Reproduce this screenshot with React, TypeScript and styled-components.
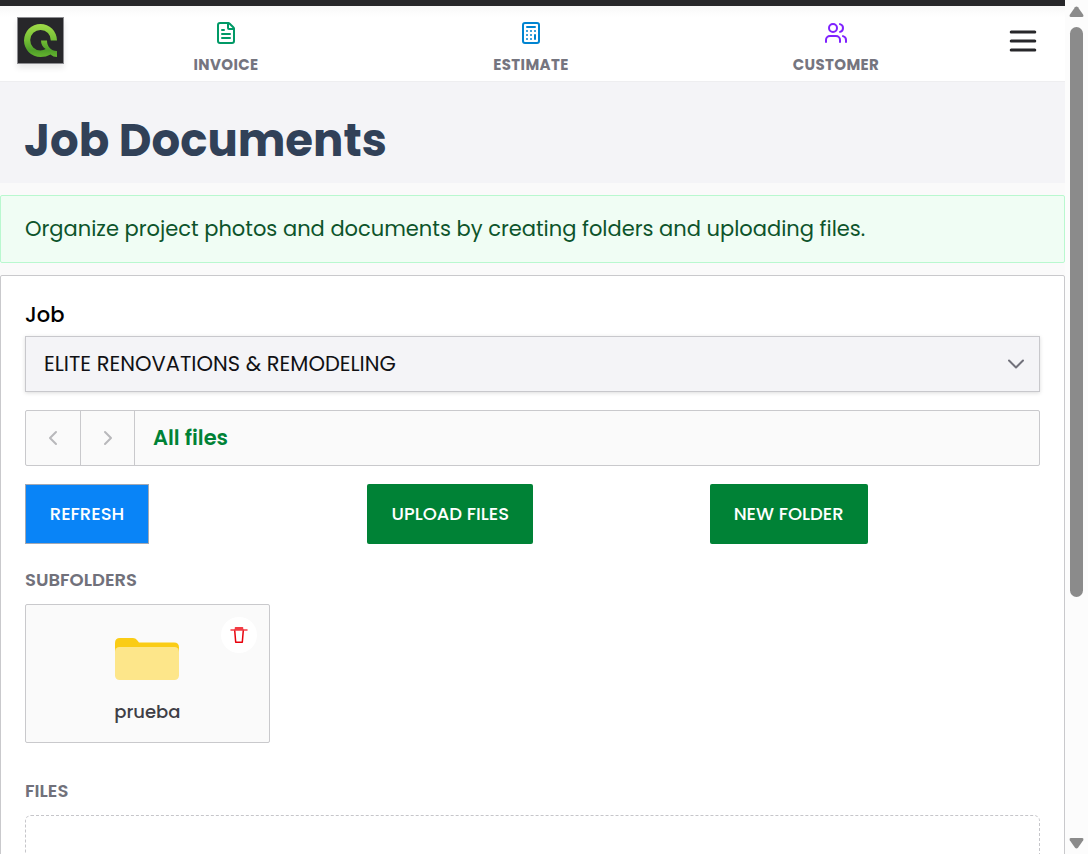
import React from "react";
import styled, { createGlobalStyle } from "styled-components";
import { FileText, Calculator, Users } from "lucide-react";

const GlobalStyle = createGlobalStyle`
  * { box-sizing: border-box; }
  html, body { margin: 0; padding: 0; height: 100%; overflow: hidden; }
  body {
    font-family: Poppins, Inter, "Open Sans", sans-serif;
    background: #fafafa;
    color: #09090b;
  }
  button { font-family: inherit; cursor: pointer; }
`;

const Screen = styled.div`
  display: flex;
  width: 1088px;
  height: 854px;
  overflow: hidden;
`;

const Page = styled.div`
  width: 1065px;
  height: 854px;
  overflow: hidden;
  display: flex;
  flex-direction: column;
`;

const Header = styled.header`
  flex: none;
  height: 82px;
  display: flex;
  background: linear-gradient(#f8f8f8, #ffffff 11px);
  background-origin: padding-box;
  border-top: 6px solid #27272a;
  border-bottom: 1px solid #eeeef0;
  padding: 0 28px 0 17px;
`;

const Logo = styled.div`
  flex: none;
  width: 47px;
  height: 47px;
  margin-top: 11px;
  border: 1px solid #8c8c90;
  background: #27272a;
  box-shadow: 0 4px 6px rgba(0, 0, 0, 0.09);
  svg { display: block; }
`;

const Nav = styled.nav`
  width: 915px;
  margin-left: 9.5px;
  display: grid;
  grid-template-columns: repeat(3, 1fr);
`;

const NavItem = styled.a<{ $color: string }>`
  display: flex;
  flex-direction: column;
  align-items: center;
  padding-top: 15px;
  font-size: 15px;
  font-weight: 700;
  line-height: 20px;
  letter-spacing: 0.025em;
  color: #75757f;
  svg { color: ${(p) => p.$color}; margin-bottom: 10px; display: block; }
`;

const MenuButton = styled.button`
  margin: 23px 0 0 auto;
  width: 28px;
  height: 24px;
  padding: 0;
  border: 0;
  background: none;
  svg { display: block; }
`;

const TitleBand = styled.div`
  flex: none;
  height: 101px;
  padding: 32px 24px 0;
  background: #f4f4f7;
`;

const Title = styled.h1`
  margin: 0;
  font-size: 45px;
  line-height: 54px;
  font-weight: 700;
  color: #314158;
`;

const Notice = styled.div`
  flex: none;
  height: 68px;
  margin-top: 12px;
  padding-left: 24px;
  display: flex;
  align-items: center;
  border: 1px solid #b9f8cf;
  border-radius: 2px;
  background: #f0fdf4;
  color: #0d542b;
  font-size: 21px;
  line-height: 30px;
`;

const Panel = styled.main`
  flex: none;
  height: 900px;
  margin-top: 12px;
  padding: 24px;
  border: 1px solid #c9c9cc;
  border-radius: 2px;
  background: #ffffff;
`;

const FieldLabel = styled.label`
  display: block;
  height: 36px;
  line-height: 30px;
  font-size: 21px;
  font-weight: 500;
  color: #000;
`;

const Select = styled.div`
  height: 56px;
  padding: 0 15px 0 18px;
  display: flex;
  align-items: center;
  justify-content: space-between;
  border: 1px solid #c8c8cc;
  background: #f4f4f7;
  box-shadow: 0 1px 4px rgba(0, 0, 0, 0.14);
  font-size: 21px;
  line-height: 30px;
  color: #111114;
`;

const PathBar = styled.div`
  height: 56px;
  margin-top: 18px;
  display: flex;
  border: 1px solid #c9c9cc;
  border-radius: 2px;
  background: #fafafa;
`;

const StepButton = styled.button<{ $width: number }>`
  width: ${(p) => p.$width}px;
  padding: 0;
  display: flex;
  align-items: center;
  justify-content: center;
  border: 0;
  border-right: 1px solid #c9c9cc;
  background: none;
`;

const Crumb = styled.span`
  display: flex;
  align-items: center;
  padding-left: 18px;
  font-size: 21px;
  line-height: 30px;
  font-weight: 600;
  color: #008236;
`;

const Actions = styled.div`
  display: grid;
  grid-template-columns: repeat(3, 1fr);
  column-gap: 12px;
  margin-top: 18px;
`;

const ActionButton = styled.button<{ $width: number; $primary?: boolean }>`
  width: ${(p) => p.$width}px;
  height: 60px;
  padding: 0 0 2px;
  border: ${(p) => (p.$primary ? "1px solid #a2a8b3" : "0")};
  border-radius: ${(p) => (p.$primary ? 0 : 2)}px;
  background: ${(p) => (p.$primary ? "#0984f7" : "#008236")};
  color: #ffffff;
  font-size: 18px;
  font-weight: 500;
`;

const SectionTitle = styled.h2<{ $top: number }>`
  margin: ${(p) => p.$top}px 0 12px;
  height: 24px;
  line-height: 24px;
  font-size: 18px;
  font-weight: 600;
  color: #71717b;
`;

const FolderCard = styled.div`
  position: relative;
  width: 244.75px;
  height: 139px;
  padding-top: 33px;
  display: flex;
  flex-direction: column;
  align-items: center;
  border: 1px solid #c9c9cc;
  border-radius: 2px;
  background: #fafafa;
`;

const FolderName = styled.span`
  margin-top: 19px;
  font-size: 18px;
  line-height: 26px;
  font-weight: 500;
  color: #3f3f46;
`;

const DeleteButton = styled.button`
  position: absolute;
  top: 12px;
  right: 12px;
  width: 36px;
  height: 36px;
  padding: 0;
  display: grid;
  place-items: center;
  border: 0;
  border-radius: 50%;
  background: #ffffff;
`;

const DropArea = styled.div`
  height: 200px;
  border: 1px dashed #c6c6ca;
  border-radius: 6px;
`;

const ScrollTrack = styled.div`
  width: 23px;
  height: 854px;
  display: flex;
  flex-direction: column;
  align-items: center;
  padding-top: 6px;
  background: #fcfcfc;
  svg { display: block; flex: none; }
`;

const ScrollThumb = styled.div`
  width: 13px;
  height: 570px;
  margin: 9px 0 240px;
  border-radius: 7px;
  background: #8b8b8b;
`;

const LogoMark = () => (
  <svg width="45" height="45" viewBox="0 0 45 45">
    <defs>
      <linearGradient id="leaf" x1="0" y1="5" x2="0" y2="39" gradientUnits="userSpaceOnUse">
        <stop offset="0" stopColor="#a3dc4a" />
        <stop offset="0.5" stopColor="#74bf35" />
        <stop offset="0.8" stopColor="#4f9f29" />
        <stop offset="1" stopColor="#65b52f" />
      </linearGradient>
    </defs>
    <path
      fill="url(#leaf)"
      d="M39 22.5H32.8A10.3 10.3 0 1 0 22.5 32.5C24.5 32.5 26.2 32 27.7 31.1C24.8 29.2 23 26.5 23 22.5H29C29 28.5 33 33 39 33V39C36.5 39 34.3 38.2 32.5 36.5C29.6 38.2 26.2 39 22.5 39A16.5 16.5 0 1 1 39 22.5Z"
    />
  </svg>
);

const MenuIcon = () => (
  <svg width="28" height="24" viewBox="0 0 28 24" stroke="#27272a" strokeWidth="3" strokeLinecap="round">
    <path d="M2.2 3H25.8M2.2 12H25.8M2.2 21H25.8" />
  </svg>
);

const Chevron = ({ direction }: { direction: "left" | "right" }) => (
  <svg width="14" height="16" viewBox="0 0 14 16" fill="none" stroke="#b8b8bb" strokeWidth="2" strokeLinecap="round" strokeLinejoin="round">
    <path d={direction === "left" ? "M10 2L4 8L10 14" : "M4 2L10 8L4 14"} />
  </svg>
);

const FolderIcon = () => (
  <svg width="64" height="42" viewBox="0 0 64 42">
    <path fill="#facc15" d="M0 15V5Q0 0 5 0H18Q20.5 0 22 2L24 4.5H59Q64 4.5 64 9.5V15Z" />
    <rect y="9" width="64" height="33" rx="4.5" fill="#fde68a" />
  </svg>
);

const TrashIcon = () => (
  <svg width="18" height="18" viewBox="0 0 18 18" fill="none" stroke="#e7000b" strokeWidth="1.5" strokeLinecap="round" strokeLinejoin="round">
    <path d="M4.7 4.2L5.7 16.2H12.3L13.3 4.2" />
    <path d="M1 4H17M5.5 3.5V1.8H12.5V3.5M6 2.8H12" stroke="#f23c44" />
  </svg>
);

export default function App() {
  return (
    <Screen>
      <GlobalStyle />
      <Page>
        <Header>
          <Logo><LogoMark /></Logo>
          <Nav>
            <NavItem $color="#009966"><FileText size={24} />INVOICE</NavItem>
            <NavItem $color="#0084d1"><Calculator size={24} />ESTIMATE</NavItem>
            <NavItem $color="#7f22fe"><Users size={24} />CUSTOMER</NavItem>
          </Nav>
          <MenuButton aria-label="Menu"><MenuIcon /></MenuButton>
        </Header>
        <TitleBand>
          <Title>Job Documents</Title>
        </TitleBand>
        <Notice>Organize project photos and documents by creating folders and uploading files.</Notice>
        <Panel>
          <FieldLabel>Job</FieldLabel>
          <Select>
            ELITE RENOVATIONS &amp; REMODELING
            <svg width="16" height="10" viewBox="0 0 16 10" fill="none" stroke="#71717b" strokeWidth="2" strokeLinecap="round" strokeLinejoin="round">
              <path d="M1 1.5L8 8.5L15 1.5" />
            </svg>
          </Select>
          <PathBar>
            <StepButton $width={55} aria-label="Back"><Chevron direction="left" /></StepButton>
            <StepButton $width={54} aria-label="Forward"><Chevron direction="right" /></StepButton>
            <Crumb>All files</Crumb>
          </PathBar>
          <Actions>
            <ActionButton $width={124} $primary>REFRESH</ActionButton>
            <ActionButton $width={166}>UPLOAD FILES</ActionButton>
            <ActionButton $width={158}>NEW FOLDER</ActionButton>
          </Actions>
          <SectionTitle $top={24}>SUBFOLDERS</SectionTitle>
          <FolderCard>
            <FolderIcon />
            <FolderName>prueba</FolderName>
            <DeleteButton aria-label="Delete folder"><TrashIcon /></DeleteButton>
          </FolderCard>
          <SectionTitle $top={36}>FILES</SectionTitle>
          <DropArea />
        </Panel>
      </Page>
      <ScrollTrack>
        <svg width="15" height="12" viewBox="0 0 15 12" fill="#8b8b8b"><path d="M6 1.2Q7.5 -0.4 9 1.2L14.2 8.8Q15 11 13 11H2Q0 11 0.8 8.8Z" /></svg>
        <ScrollThumb />
        <svg width="15" height="12" viewBox="0 0 15 12" fill="#8b8b8b"><path d="M6 10.8Q7.5 12.4 9 10.8L14.2 3.2Q15 1 13 1H2Q0 1 0.8 3.2Z" /></svg>
      </ScrollTrack>
    </Screen>
  );
}
